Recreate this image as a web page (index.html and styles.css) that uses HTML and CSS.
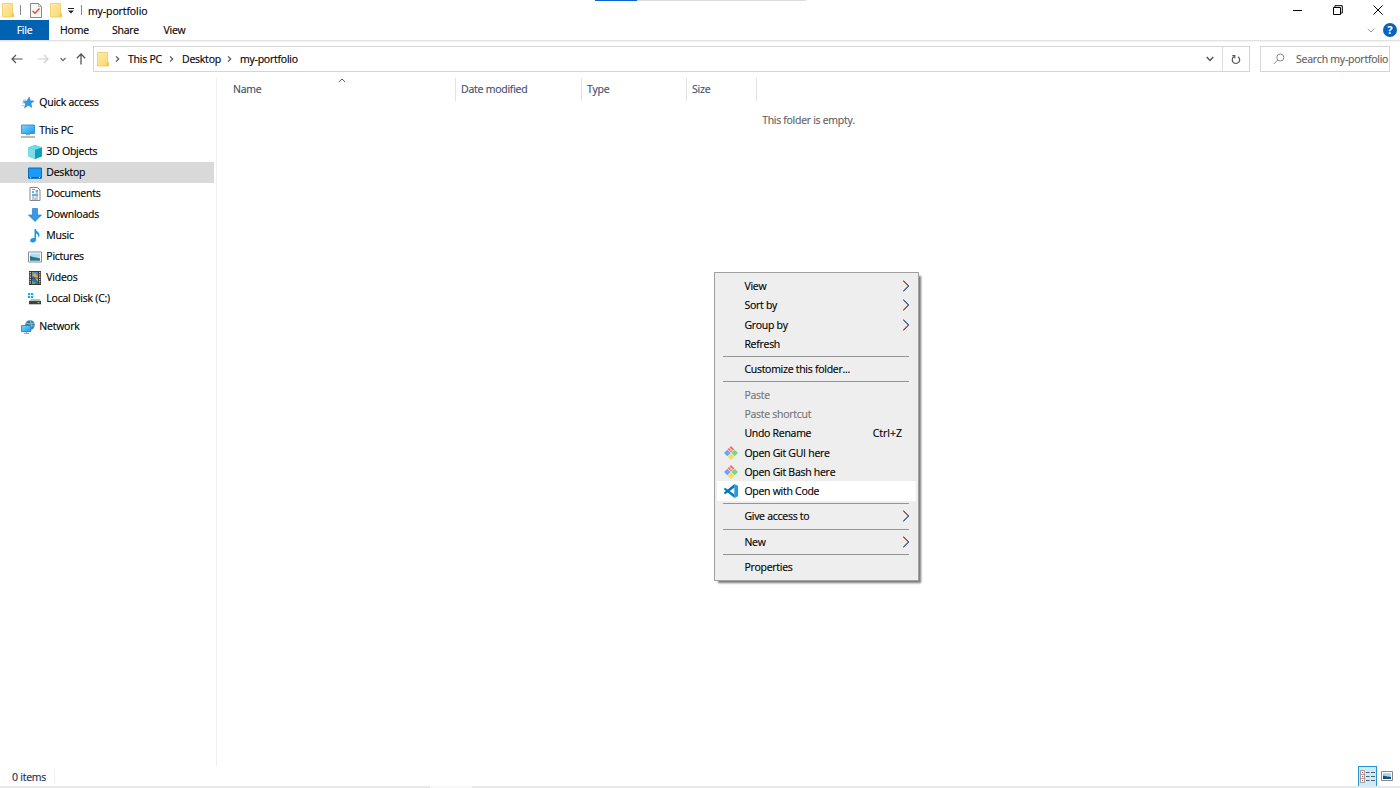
FILE: index.html
```html
<!DOCTYPE html>
<html lang="en">
<head>
  <meta charset="UTF-8">
  <meta name="viewport" content="width=device-width, initial-scale=1.0">
  <title>my-portfolio</title>
  <link rel="stylesheet" href="styles.css">
</head>
<body>
  <!-- Shared icons -->
  <svg class="defs" width="0" height="0">
    <defs>
      <linearGradient id="folder-fill" x2="1" y2="1"><stop offset="0" stop-color="#ffecaa"/><stop offset="1" stop-color="#fbd768"/></linearGradient>
      <linearGradient id="screen-fill" x2="1" y2="1"><stop offset="0" stop-color="#7fd4ff"/><stop offset="1" stop-color="#139bee"/></linearGradient>
      <symbol id="folder" viewBox="0 0 12 15">
        <path d="M.5.5h10v9.500h1v4H.5z" fill="url(#folder-fill)" stroke="#efc863" stroke-width=".8"/>
        <path d="M10 10.500h1.500v3.500H9.500z" fill="#f5c43f"/>
      </symbol>
      <symbol id="arrow" viewBox="0 0 8 12">
        <path d="M.9.8 6.200 6 .9 11.200" fill="none" stroke="#e08a4a" stroke-width="1"/>
        <path d="M1.700.8 7 6 1.700 11.200" fill="none" stroke="#5a8fd8" stroke-width="1"/>
        <path d="M1.300.8 6.600 6 1.300 11.200" fill="none" stroke="#352a48" stroke-width=".8"/>
      </symbol>
      <symbol id="crumb" viewBox="0 0 5 8"><path d="M1 1.300 3.700 4 1 6.700" fill="none" stroke="#555" stroke-width="1.200"/></symbol>
      <symbol id="git" viewBox="0 0 14 14">
        <path d="M7 0 10.300 3.300 7 6.600 3.700 3.300z" fill="#fb6b6b"/>
        <path d="M3.300 3.700 6.600 7 3.300 10.300 0 7z" fill="#6aa3fb"/>
        <path d="M10.700 3.700 14 7 10.700 10.300 7.400 7z" fill="#79d97a"/>
        <path d="M7 7.400 10.300 10.700 7 14 3.700 10.700z" fill="#fbdb5c"/>
        <path d="M5 1.600 7 3.500V5M7 3.300l1.600 1" fill="none" stroke="#fff" stroke-width=".8"/>
      </symbol>
    </defs>
  </svg>

  <div class="window">
    <header class="titlebar">
      <svg class="folder" width="12" height="15"><use href="#folder"/></svg>
      <span class="bar bar-first"></span>
      <svg class="check" width="12" height="15" viewBox="0 0 12 15"><path d="M.5.5h8l3 3v11H.5z" fill="#f8f8f8" stroke="#888"/><path d="M8.500.5v3h3" fill="none" stroke="#999" stroke-width=".7"/><path d="M2.500 8 5 10.200 9.500 5.500" fill="none" stroke="#e4572a" stroke-width="1.600"/></svg>
      <svg class="folder-second" width="12" height="15"><use href="#folder"/></svg>
      <svg class="customize" width="8" height="6" viewBox="0 0 8 6"><path d="M1 .5h6" stroke="#222"/><path d="M1 2.500h6L4 5.500z" fill="#222"/></svg>
      <span class="bar bar-second"></span>
      <span class="title">my-portfolio</span>
      <div class="progress"><span></span></div>
      <div class="controls">
        <svg width="10" height="10" viewBox="0 0 10 10"><path d="M0 5.500h9" stroke="#000"/></svg>
        <svg width="10" height="10" viewBox="0 0 10 10"><path d="M.5 2.500h7v7h-7zM2 2V.7h7.300V8H8" fill="none" stroke="#000"/></svg>
        <svg width="10" height="10" viewBox="0 0 10 10"><path d="M.5.5l9 9M9.500.5l-9 9" stroke="#000"/></svg>
      </div>
    </header>

    <nav class="tabs">
      <span class="tab file">File</span>
      <span class="tab home">Home</span>
      <span class="tab share">Share</span>
      <span class="tab view">View</span>
      <div class="help">
        <svg width="8" height="5" viewBox="0 0 8 5"><path d="M.7.7 4 4 7.300.7" fill="none" stroke="#999"/></svg>
        <span class="question">?</span>
      </div>
    </nav>

    <div class="address-row">
      <div class="arrows">
        <svg width="12" height="10" viewBox="0 0 12 10"><path d="M11.500 5H1M5 1 1 5l4 4" fill="none" stroke="#555" stroke-width="1.200"/></svg>
        <svg width="12" height="10" viewBox="0 0 12 10"><path d="M.5 5H11M7 1l4 4-4 4" fill="none" stroke="#d0d0d0" stroke-width="1.200"/></svg>
        <svg width="6" height="5" viewBox="0 0 6 5"><path d="M.5 1 3 3.600 5.500 1" fill="none" stroke="#666" stroke-width="1.200"/></svg>
        <svg width="10" height="12" viewBox="0 0 10 12"><path d="M5 11.500V1M.8 5.300 5 1l4.200 4.300" fill="none" stroke="#555" stroke-width="1.300"/></svg>
      </div>
      <div class="address">
        <svg class="folder" width="12" height="15"><use href="#folder"/></svg>
        <svg class="crumb" width="5" height="8"><use href="#crumb"/></svg>
        <span class="crumb-pc">This PC</span>
        <svg class="crumb" width="5" height="8"><use href="#crumb"/></svg>
        <span class="crumb-desktop">Desktop</span>
        <svg class="crumb" width="5" height="8"><use href="#crumb"/></svg>
        <span>my-portfolio</span>
        <svg class="drop" width="8" height="6" viewBox="0 0 8 6"><path d="M.7 1 4 4.500 7.300 1" fill="none" stroke="#555" stroke-width="1.500"/></svg>
        <div class="refresh">
          <svg width="10" height="11" viewBox="0 0 10 11"><path d="M2.800 2.800A3.700 3.700 0 1 0 7 2.700M1.300 1.700h2.500v2.500" fill="none" stroke="#555" stroke-width="1.200"/></svg>
        </div>
      </div>
      <div class="search">
        <svg width="12" height="12" viewBox="0 0 12 12"><circle cx="7.300" cy="4.500" r="3.500" fill="none" stroke="#888"/><path d="M4.700 7 .8 11" stroke="#888"/></svg>
        <span>Search my-portfolio</span>
      </div>
    </div>

    <main class="content">
      <aside class="sidebar">
        <div class="item root">
          <svg width="14" height="14" viewBox="0 0 14 14"><path d="M8.200 1 9.300 4.700 13 5 10 7.300 10.700 11.500 7.300 9.300 3.500 12 4.600 7.900 2 5.400 5.900 4.900z" fill="#2c9ce6" stroke="#1d79c4" stroke-width=".5"/><path d="M1 7h3M.5 9.500h3M2 4h3" stroke="#8cc4ea" stroke-width=".8"/></svg>
          <span>Quick access</span>
        </div>
        <div class="item root">
          <svg width="14" height="14" viewBox="0 0 14 14"><path d="M.5 1h13v8.500H.5z" fill="url(#screen-fill)" stroke="#2785b9" stroke-width=".8"/><path d="M5 10.500h4M0 13h14" stroke="#9aa5b3" stroke-width="1.300"/></svg>
          <span>This PC</span>
        </div>
        <div class="item">
          <svg width="14" height="14" viewBox="0 0 14 14"><path d="M0 2.500 7 0l7 2.500v8.800L7 14 0 11.300z" fill="#20b8d3"/><path d="M0 2.500 7 0l7 2.500L7 5z" fill="#6fdbe8"/><path d="M0 2.500 7 5v9L0 11.300z" fill="#7fdbe6"/><path d="M7 5l7-2.500v8.800L7 14z" fill="#0d9fc0"/></svg>
          <span>3D Objects</span>
        </div>
        <div class="item selected">
          <svg width="14" height="14" viewBox="0 0 14 14"><path d="M.5 2h13v10.300H.5z" fill="#1c9afa" stroke="#086eb5"/><path d="M1 11.500h12" stroke="#075993"/><path d="M2 11.500h1M11 11.500h1" stroke="#fff"/></svg>
          <span>Desktop</span>
        </div>
        <div class="item">
          <svg width="14" height="14" viewBox="0 0 14 14"><path d="M2 .5h7.500l2.500 2.500v10.500H2z" fill="#fff" stroke="#858585"/><path d="M4 5h2M7.500 4H10M4 8h6" stroke="#3895cb" stroke-width="1.500"/><path d="M4 2.500h3M7.500 6H10M4 10h2.500M7.500 10H10M4 12h6" stroke="#68798a" stroke-width=".8"/></svg>
          <span>Documents</span>
        </div>
        <div class="item">
          <svg width="14" height="14" viewBox="0 0 14 14"><path d="M4.500.5h5V7h4L7 13.500.5 7h4z" fill="#3898e8" stroke="#287fc8" stroke-width=".7"/></svg>
          <span>Downloads</span>
        </div>
        <div class="item">
          <svg width="14" height="14" viewBox="0 0 14 14"><path d="M6.500 0h1.300c.4 2.500 3.700 3 3.700 6 0 1.200-.6 2.200-1.300 2.800.6-2.300-.7-3.600-2.200-4.200v6.200c0 1.600-1.300 2.700-3 2.700-1.600 0-2.800-.8-2.800-2.100C2.200 9.500 4.200 8.700 6.500 9z" fill="#1599e9"/></svg>
          <span>Music</span>
        </div>
        <div class="item">
          <svg width="14" height="14" viewBox="0 0 14 14"><path d="M.5 2h13v10H.5z" fill="#fff" stroke="#8c8c8c"/><path d="M2 3.500h10v7H2z" fill="#a9ddfa"/><path d="M2 6l3 1 3 .5 4 1v2H2z" fill="#297176"/><path d="M2 9.500h10v1H2z" fill="#367cae"/></svg>
          <span>Pictures</span>
        </div>
        <div class="item">
          <svg width="14" height="14" viewBox="0 0 14 14"><path d="M1 0h12v14H1z" fill="#383a3f"/><path d="M2.300 1v12M11.700 1v12" stroke="#d5d5d5" stroke-width="1.200" stroke-dasharray="1.300 1"/><path d="M4 1h6v5.500H4z" fill="#4c86c7"/><path d="M4 7.500h6V13H4z" fill="#366eaa"/><path d="M4 4l3-2 3 3v1.500H7zM7 7.500h3v3z" fill="#dfa63b"/><path d="M4 1h2v2H4zM4 10l3 1v2H4z" fill="#69a75b"/></svg>
          <span>Videos</span>
        </div>
        <div class="item">
          <svg width="14" height="14" viewBox="0 0 14 14"><path d="M0 1h2.200v2H0zM3 1h2.200v2H3zM0 4h2.200v2H0zM3 4h2.200v2H3z" fill="#13aaf0"/><path d="M3 7h8.500l1.500 2H1z" fill="#b9bdc0"/><path d="M1 9h12v3.300H1z" fill="#3c4144"/><path d="M9.500 10.600h2" stroke="#7fdf8a"/></svg>
          <span>Local Disk (C:)</span>
        </div>
        <div class="item root network">
          <svg width="14" height="14" viewBox="0 0 14 14"><circle cx="9" cy="5" r="4.800" fill="#397e9d"/><path d="M5 3q4 2 8 0M5 7q4-1.500 8.500-1M9 .2q3 4 .5 9" fill="none" stroke="#9ed0df" stroke-width=".8"/><path d="M.5 5.500h9.300v6H.5z" fill="url(#screen-fill)" stroke="#287ead" stroke-width=".8"/><path d="M3 13.300h5M5.500 12v1" stroke="#7d97aa"/></svg>
          <span>Network</span>
        </div>
      </aside>

      <section class="files">
        <div class="columns">
          <div class="column name">Name
            <svg class="sort" width="8" height="5" viewBox="0 0 8 5"><path d="M.8 4 4 1l3.200 3" fill="none" stroke="#555"/></svg>
          </div>
          <div class="column date">Date modified</div>
          <div class="column type">Type</div>
          <div class="column size">Size</div>
        </div>
        <p class="empty">This folder is empty.</p>
      </section>
    </main>

    <footer class="status">
      <span class="count">0 items</span>
      <div class="modes">
        <div class="mode active">
          <svg width="15" height="13" viewBox="0 0 15 13"><path d="M.5.5h4v12h-4zM.5 4.500h4M.5 8.500h4" fill="#fff" stroke="#8b8b8b" stroke-width=".8"/><path d="M2 2.500h1M2 6.500h1M2 10.500h1" stroke="#d14242"/><path d="M6 2.500h3.500M11 2.500h4M6 6.500h3.500M11 6.500h4M6 10.500h3.500M11 10.500h4" stroke="#52636e"/></svg>
        </div>
        <svg width="12" height="10" viewBox="0 0 12 10"><path d="M.5.5h11v9H.5z" fill="#fff" stroke="#888"/><path d="M2 2h8v6H2z" fill="#a5d7fa"/><path d="M2 4.500l4 1 4 .5V8H2z" fill="#194b75"/></svg>
      </div>
    </footer>
    <div class="taskbar-edge"><span></span></div>
  </div>

  <!-- Context menu -->
  <div class="menu">
    <div class="entry">View<svg class="more" width="8" height="12"><use href="#arrow"/></svg></div>
    <div class="entry">Sort by<svg class="more" width="8" height="12"><use href="#arrow"/></svg></div>
    <div class="entry">Group by<svg class="more" width="8" height="12"><use href="#arrow"/></svg></div>
    <div class="entry">Refresh</div>
    <div class="separator"></div>
    <div class="entry">Customize this folder...</div>
    <div class="separator"></div>
    <div class="entry disabled">Paste</div>
    <div class="entry disabled">Paste shortcut</div>
    <div class="entry">Undo Rename<span class="shortcut">Ctrl+Z</span></div>
    <div class="entry with-icon"><svg width="14" height="14"><use href="#git"/></svg>Open Git GUI here</div>
    <div class="entry with-icon"><svg width="14" height="14"><use href="#git"/></svg>Open Git Bash here</div>
    <div class="entry with-icon hover"><svg width="14" height="14" viewBox="0 0 14 14"><path d="M0 4.700 1.200 3.700 10.500 10.500V14L0 5.600z" fill="#087fc5"/><path d="M0 9.300 1.200 10.300 10.500 3.500V0L0 8.400z" fill="#0873ba"/><path d="M10.300 0 14 1.700v10.600L10.300 14z" fill="#2499e5"/></svg>Open with Code</div>
    <div class="separator"></div>
    <div class="entry">Give access to<svg class="more" width="8" height="12"><use href="#arrow"/></svg></div>
    <div class="separator"></div>
    <div class="entry">New<svg class="more" width="8" height="12"><use href="#arrow"/></svg></div>
    <div class="separator"></div>
    <div class="entry">Properties</div>
  </div>
</body>
</html>
```
FILE: styles.css
```css
/* General Layout */
* {
  box-sizing: border-box;
}

body {
  margin: 0;
  font-family: "Open Sans", "Noto Sans", sans-serif;
  font-size: 10.5px;
  letter-spacing: -0.23px;
  line-height: 14px;
  color: #000;
  background: #fff;
  -webkit-text-stroke: 0.15px;
  overflow: hidden;
}

svg {
  display: block;
  flex-shrink: 0;
}

.defs {
  position: absolute;
}

.window {
  display: flex;
  flex-direction: column;
  width: 1400px;
  height: 788px;
}

/* Title bar */
.titlebar {
  display: flex;
  align-items: center;
  height: 20px;
  padding-left: 2px;
}

.bar {
  width: 1px;
  height: 10px;
  background: #888;
}

.bar-first {
  margin: 0 9px 0 6px;
}

.folder-second {
  margin-left: 8px;
}

.customize {
  margin: 2px 6px 0 5px;
}

.title {
  width: 507px;
  margin-left: 6px;
  padding-top: 1px;
  letter-spacing: -0.1px;
}

.progress {
  align-self: flex-start;
  width: 211px;
  height: 1px;
  background: #ddd;
}

.progress span {
  display: block;
  width: 42px;
  height: 1px;
  background: #0863ce;
}

.controls {
  display: flex;
  gap: 30px;
  margin: -1px 17px 0 auto;
}

/* Ribbon tabs */
.tabs {
  display: flex;
  align-items: center;
  height: 21px;
  border-bottom: 1px solid #e2e2e2;
}

.tab {
  width: 51px;
  line-height: 21px;
  text-align: center;
}

.file {
  width: 49px;
  height: 20px;
  color: #fff;
  background: #0063b1;
}

.view {
  width: 47px;
}

.help {
  display: flex;
  align-items: center;
  gap: 8px;
  margin-left: auto;
  padding-right: 3px;
}

.question {
  width: 14px;
  height: 14px;
  border-radius: 50%;
  background: #0863bd;
  color: #fff;
  font-weight: bold;
  text-align: center;
}

/* Address bar */
.address-row {
  display: flex;
  height: 36px;
  padding: 5px 10px 4px 0;
  border-top: 1px solid #f4f4f4;
}

.arrows {
  display: flex;
  align-items: center;
  width: 93px;
  height: 24px;
  padding-left: 11px;
}

.arrows svg:nth-child(2) {
  margin-left: 14px;
}

.arrows svg:nth-child(3) {
  margin-left: 11px;
}

.arrows svg:nth-child(4) {
  margin-left: 10px;
}

.address {
  display: flex;
  align-items: center;
  width: 1157px;
  height: 26px;
  margin-top: -1px;
  border: 1px solid #d5d5d5;
}

.address .folder {
  margin: 0 6px 0 3px;
}

.address .crumb {
  margin-right: 8px;
}

.crumb-pc {
  width: 41px;
}

.crumb-desktop {
  width: 45px;
}

.drop {
  margin-left: auto;
  margin-right: 8px;
}

.refresh {
  display: flex;
  align-items: center;
  justify-content: center;
  width: 27px;
  height: 24px;
  border-left: 1px solid #ddd;
}

.search {
  display: flex;
  align-items: center;
  gap: 11px;
  width: 130px;
  height: 26px;
  margin: -1px 0 0 10px;
  padding-left: 12px;
  border: 1px solid #d5d5d5;
  color: #606060;
  white-space: nowrap;
  overflow: hidden;
}

/* Navigation pane */
.content {
  display: flex;
  flex: 1;
}

.sidebar {
  width: 217px;
  padding-top: 15px;
  border-right: 1px solid #f0f0f0;
}

.item {
  display: flex;
  align-items: center;
  gap: 4.3px;
  width: 214px;
  height: 21px;
  padding-left: 28px;
}

.item span {
  padding-bottom: 1.5px;
}

.root {
  padding-left: 21px;
  margin-bottom: 7px;
}

.root + .root {
  margin-bottom: 0;
}

.network {
  margin-top: 7px;
}

.selected {
  background: #d9d9d9;
}

/* File list */
.files {
  flex: 1;
}

.columns {
  display: flex;
  padding-top: 1px;
}

.column {
  height: 23px;
  padding-left: 5px;
  border-right: 1px solid #e2e2e2;
  line-height: 23px;
  color: #3c4c6c;
}

.name {
  position: relative;
  width: 239px;
  padding-left: 16px;
}

.sort {
  position: absolute;
  left: 121px;
  top: 0;
}

.date {
  width: 126px;
}

.type {
  width: 105px;
}

.size {
  width: 70px;
}

.empty {
  margin: 12px 0 0;
  text-align: center;
  letter-spacing: -0.28px;
  color: #606060;
}

/* Status bar */
.status {
  display: flex;
  align-items: center;
  justify-content: space-between;
  height: 20px;
  padding: 0 7px 0 12px;
}

.count {
  padding-top: 1px;
  padding-right: 8px;
  border-right: 1px solid #f1f1f1;
  color: #182b52;
}

.modes {
  display: flex;
  align-items: center;
  gap: 4px;
}

.mode {
  display: flex;
  align-items: center;
  justify-content: center;
  width: 19px;
  height: 20px;
}

.active {
  border: 1px solid #2596cf;
  border-bottom: 0;
  background: #cbeafb;
}

.taskbar-edge {
  height: 2px;
  padding-left: 430px;
  background: #e8e8e8;
}

.taskbar-edge span {
  display: block;
  width: 42px;
  height: 2px;
  background: #f8f8f8;
}

/* Context menu */
.menu {
  position: absolute;
  left: 714px;
  top: 272px;
  width: 205px;
  height: 309px;
  padding: 3.5px 2px;
  border: 1px solid #a0a0a0;
  background: #eee;
  box-shadow: 3px 3px 2px -1px #777;
  letter-spacing: -0.27px;
}

.entry {
  display: flex;
  align-items: center;
  height: 19.25px;
  padding: 0 9px 0 27.4px;
  white-space: nowrap;
}

.more {
  margin-left: auto;
  margin-right: -3px;
}

.shortcut {
  margin-left: auto;
  margin-right: 5px;
  letter-spacing: 0;
}

.with-icon {
  gap: 6.9px;
  padding-left: 6.5px;
}

.hover {
  background: #fff;
}

.disabled {
  color: #747474;
}

.separator {
  height: 1px;
  margin: 2.5px 7px 2.7px 6px;
  background: #949494;
}
```
